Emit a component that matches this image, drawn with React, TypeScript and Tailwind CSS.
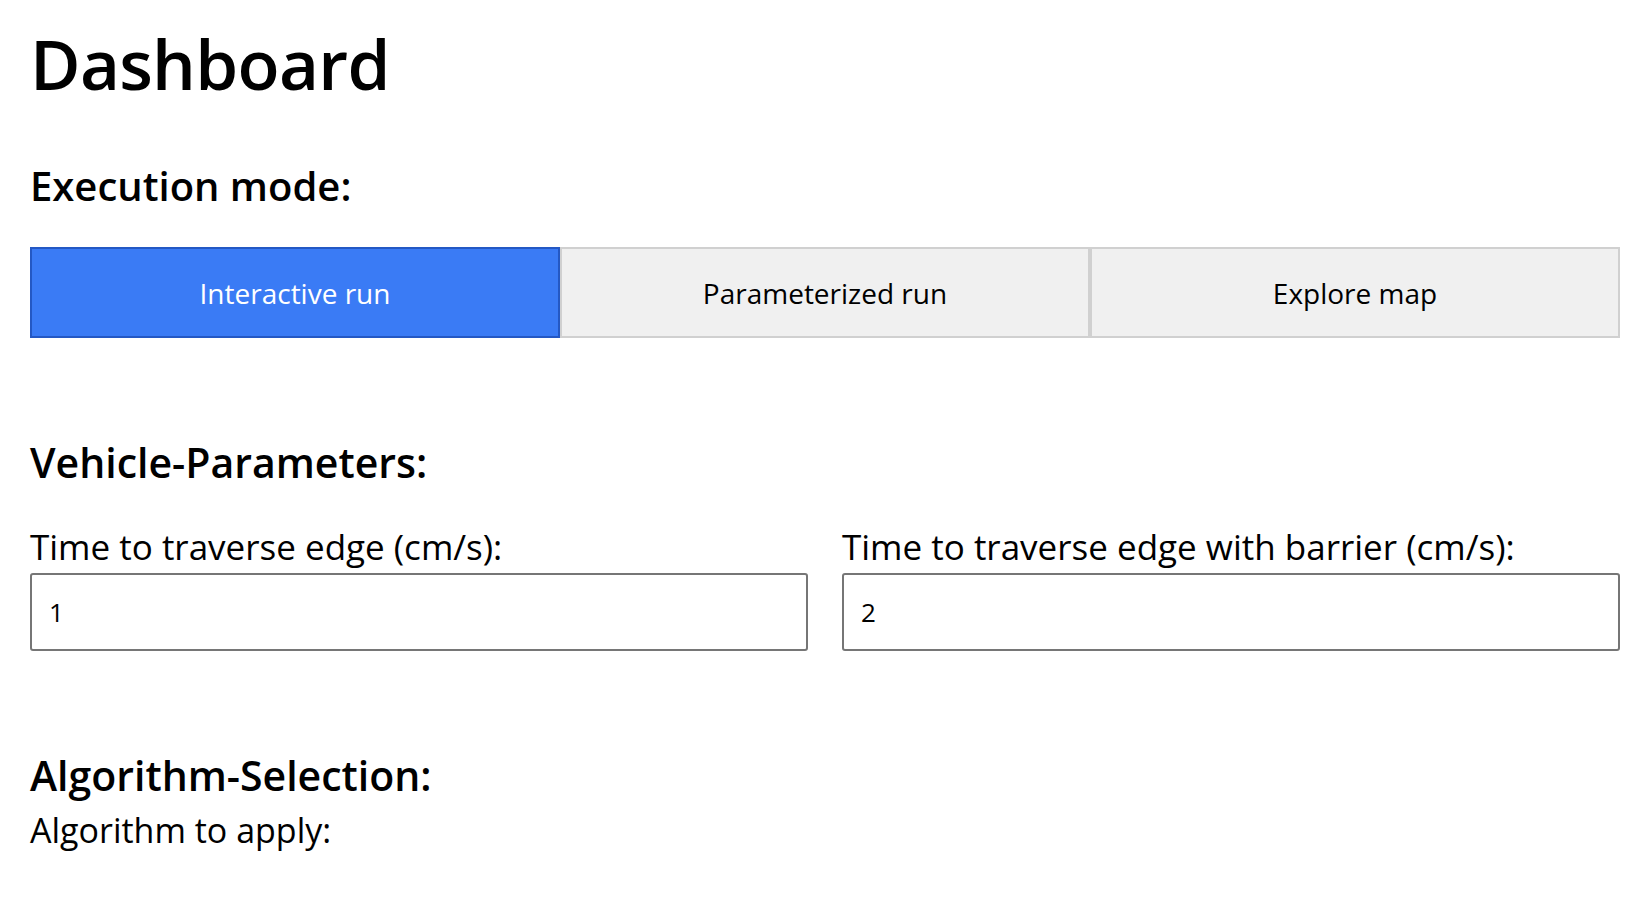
import { useState } from "react";

const MODES = ["Interactive run", "Parameterized run", "Explore map"];

export default function App() {
  const [mode, setMode] = useState(0);
  const [edge, setEdge] = useState("1");
  const [barrier, setBarrier] = useState("2");

  return (
    <div className="min-h-screen bg-white text-black pl-[30px] pr-[32px] font-['Open_Sans',sans-serif]">
      <h1 className="pt-[22px] text-[69px] leading-[82px] font-semibold tracking-[-0.01em]">Dashboard</h1>

      <h2 className="mt-[58px] text-[40px] leading-[48px] font-semibold">Execution mode:</h2>
      <div className="mt-[37px] grid grid-cols-3">
        {MODES.map((m, i) => (
          <button
            key={m}
            onClick={() => setMode(i)}
            className={
              i === mode
                ? "h-[91px] border-2 border-[#2458c4] bg-[#3a7bf5] text-white text-[28px]"
                : "h-[91px] border-2 border-[#d0d0d0] bg-[#f0f0f0] text-black text-[28px]"
            }
          >
            {m}
          </button>
        ))}
      </div>

      <h2 className="mt-[100px] text-[41px] leading-[48px] font-semibold">Vehicle-Parameters:</h2>
      <div className="mt-[40px] grid grid-cols-2 gap-x-[34px]">
        <label className="flex flex-col">
          <span className="text-[35px] leading-[42px]">Time to traverse edge (cm/s):</span>
          <input
            value={edge}
            onChange={e => setEdge(e.target.value)}
            className="mt-[5px] h-[78px] rounded-[3px] border-2 border-[#767676] px-[17px] text-[26px] outline-none"
          />
        </label>
        <label className="flex flex-col">
          <span className="text-[35px] leading-[42px]">Time to traverse edge with barrier (cm/s):</span>
          <input
            value={barrier}
            onChange={e => setBarrier(e.target.value)}
            className="mt-[5px] h-[78px] rounded-[3px] border-2 border-[#767676] px-[17px] text-[26px] outline-none"
          />
        </label>
      </div>

      <h2 className="mt-[100px] text-[41px] leading-[48px] font-semibold">Algorithm-Selection:</h2>
      <p className="mt-[11px] text-[34px] leading-[40px]">Algorithm to apply:</p>
    </div>
  );
}
